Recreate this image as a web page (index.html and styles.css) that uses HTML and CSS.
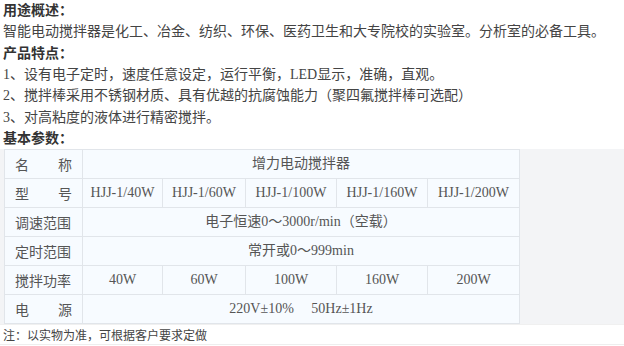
FILE: index.html
```html
<!DOCTYPE html>
<html lang="zh">
<head>
<meta charset="utf-8">
<link rel="stylesheet" href="styles.css">
</head>
<body>
<div class="intro">
  <p class="head">用途概述：</p>
  <p>智能电动搅拌器是化工、冶金、纺织、环保、医药卫生和大专院校的实验室。分析室的必备工具。</p>
  <p class="head">产品特点：</p>
  <p>1、设有电子定时，速度任意设定，运行平衡，LED显示，准确，直观。</p>
  <p>2、搅拌棒采用不锈钢材质、具有优越的抗腐蚀能力（聚四氟搅拌棒可选配）</p>
  <p>3、对高粘度的液体进行精密搅拌。</p>
  <p class="head">基本参数：</p>
</div>
<div class="tablewrap">
  <table class="params">
    <colgroup>
      <col class="c1"><col class="c2"><col class="c3"><col class="c4"><col class="c5"><col class="c6">
    </colgroup>
    <tr>
      <td class="label"><span class="spread"><span>名</span><span>称</span></span></td>
      <td colspan="5">增力电动搅拌器</td>
    </tr>
    <tr>
      <td class="label"><span class="spread"><span>型</span><span>号</span></span></td>
      <td>HJJ-1/40W</td>
      <td>HJJ-1/60W</td>
      <td>HJJ-1/100W</td>
      <td>HJJ-1/160W</td>
      <td>HJJ-1/200W</td>
    </tr>
    <tr>
      <td class="label">调速范围</td>
      <td colspan="5">电子恒速0～3000r/min（空载）</td>
    </tr>
    <tr>
      <td class="label">定时范围</td>
      <td colspan="5">常开或0～999min</td>
    </tr>
    <tr>
      <td class="label">搅拌功率</td>
      <td>40W</td>
      <td>60W</td>
      <td>100W</td>
      <td>160W</td>
      <td>200W</td>
    </tr>
    <tr>
      <td class="label"><span class="spread"><span>电</span><span>源</span></span></td>
      <td colspan="5">220V±10%&nbsp;&nbsp;&nbsp;&nbsp;&nbsp;50Hz±1Hz</td>
    </tr>
  </table>
</div>
<p class="note">注：以实物为准，可根据客户要求定做</p>
</body>
</html>
```
FILE: styles.css
```css
html, body {
  margin: 0;
  padding: 0;
  background: #ffffff;
}
body {
  font-family: "Liberation Serif", "Noto Sans CJK SC", sans-serif;
  font-size: 14px;
  color: #444;
}
.intro {
  padding-left: 3px;
}
.intro p {
  margin: 0;
  line-height: 21.33px;
  white-space: nowrap;
}
.intro p.head {
  font-weight: bold;
  color: #333;
}
.tablewrap {
  background: #f3f4f6;
  padding-left: 4px;
  height: 175px;
  border-bottom: 1px solid #f0f0f0;
}
.params {
  border-collapse: collapse;
  table-layout: fixed;
  width: 516px;
  background: #f7fbff;
  color: #555;
}
.params .c1 { width: 78px; }
.params .c2 { width: 80px; }
.params .c3 { width: 83px; }
.params .c4 { width: 91px; }
.params .c5 { width: 91px; }
.params .c6 { width: 92px; }
.params td {
  border: 1px solid #e1e5ea;
  height: 28px;
  padding: 0;
  text-align: center;
  white-space: nowrap;
  font-size: 14px;
  line-height: 20px;
}
.params td.label {
  padding: 0 10px 0 10px;
  text-align: left;
  font-family: "Noto Sans CJK SC", sans-serif;
}
.spread {
  display: flex;
  justify-content: space-between;
}
.note {
  margin: 0;
  padding: 0 0 0 3px;
  height: 19px;
  line-height: 19px;
  font-size: 12px;
  font-family: "Noto Sans CJK SC", sans-serif;
  color: #444;
  border-bottom: 1px solid #eeeeee;
}
```
